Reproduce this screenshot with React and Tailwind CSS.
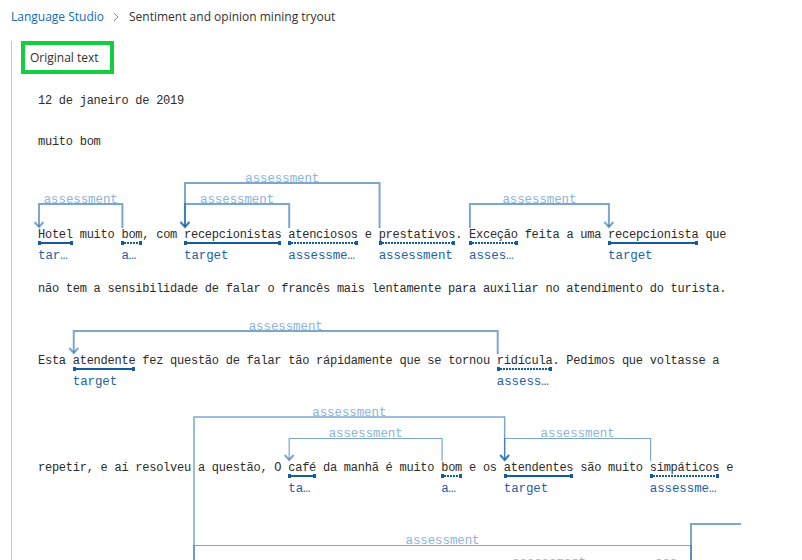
import React from "react";

const X = (i) => 38 + i * 6.95 + 1;
const LC = "rgba(15,95,168,0.55)";
const LABEL = "#8db3d9";

function Mark({ kind, label, children }) {
  return (
    <span className="relative">
      {children}
      {kind === "t" ? (
        <span className="absolute left-0 right-0 top-[14px] h-[2px] bg-[#135d9f]" />
      ) : (
        <span className="absolute left-0 right-0 top-[14px] h-[2px] bg-[repeating-linear-gradient(90deg,#135d9f_0px,#135d9f_2px,transparent_2px,transparent_3px)]" />
      )}
      <span className="absolute left-0 top-[13px] h-[4px] w-[3px] bg-[#135d9f]" />
      <span className="absolute right-0 top-[13px] h-[4px] w-[3px] bg-[#135d9f]" />
      <span className="absolute left-0 top-[20px] whitespace-nowrap text-[12.5px] leading-[16px] tracking-[-0.1px] text-[#1b62a6]">
        {label}
      </span>
    </span>
  );
}

function Arc({ from, to, y, top, w = 2, arrow = true, label = "assessment" }) {
  const mid = (from + to) / 2;
  return (
    <g>
      <path
        d={`M${from} ${top + 1} V${y} H${to} V${top - 0.5}`}
        fill="none"
        stroke={LC}
        strokeWidth={w}
      />
      {arrow && (
        <polyline
          points={`${to - 4.5},${top - 5} ${to},${top} ${to + 4.5},${top - 5}`}
          fill="none"
          stroke={LC}
          strokeWidth={2}
        />
      )}
      <text
        x={mid}
        y={y - 1.5}
        textAnchor="middle"
        fontFamily="'Liberation Mono', monospace"
        fontSize="12.5"
        letterSpacing="-0.1"
        fill={LABEL}
      >
        {label}
      </text>
    </g>
  );
}

export default function App() {
  return (
    <div className="relative h-[560px] w-[802px] overflow-hidden bg-white">
      <div className="flex h-[33px] items-center pl-[11px] font-['Open_Sans',sans-serif] text-[12px]">
        <span className="text-[#0f6cbd]">Language Studio</span>
        <svg className="ml-[9px] mr-[10px]" width="6" height="10" viewBox="0 0 6 10">
          <path d="M1 1 L5 5 L1 9" fill="none" stroke="#8a8886" strokeWidth="1" />
        </svg>
        <span className="text-[#323130]">Sentiment and opinion mining tryout</span>
      </div>
      <div className="ml-[11px] h-[527px] border-l border-[#c8c6c4]">
        <div className="ml-[9px] mt-[8px] flex h-[33px] w-[93px] items-center border-4 border-[#12cf40] pl-[5px] font-['Open_Sans',sans-serif] text-[12px] text-[#323130]">
          Original text
        </div>
        <div className="whitespace-pre pl-[26px] font-['Liberation_Mono',monospace] text-[12px] leading-[16px] tracking-[-0.25px] text-[#2b2b2b]">
          <div className="mt-[19px]">12 de janeiro de 2019</div>
          <div className="mt-[25px]">muito bom</div>
          <div className="mt-[77px]">
            <Mark kind="t" label="tar…">Hotel</Mark>
            {" muito "}
            <Mark kind="a" label="a…">bom</Mark>
            {", com "}
            <Mark kind="t" label="target">recepcionistas</Mark>
            {" "}
            <Mark kind="a" label="assessme…">atenciosos</Mark>
            {" e "}
            <Mark kind="a" label="assessment">prestativos</Mark>
            {". "}
            <Mark kind="a" label="asses…">Exceção</Mark>
            {" feita a uma "}
            <Mark kind="t" label="target">recepcionista</Mark>
            {" que"}
          </div>
          <div className="mt-[38px]">
            não tem a sensibilidade de falar o francês mais lentamente para auxiliar no atendimento do turista.
          </div>
          <div className="mt-[56px]">
            {"Esta "}
            <Mark kind="t" label="target">atendente</Mark>
            {" fez questão de falar tão rápidamente que se tornou "}
            <Mark kind="a" label="assess…">ridícula</Mark>
            {". Pedimos que voltasse a"}
          </div>
          <div className="mt-[91px]">
            {"repetir, e aí resolveu a questão, O "}
            <Mark kind="t" label="ta…">café</Mark>
            {" da manhã é muito "}
            <Mark kind="a" label="a…">bom</Mark>
            {" e os "}
            <Mark kind="t" label="target">atendentes</Mark>
            {" são muito "}
            <Mark kind="a" label="assessme…">simpáticos</Mark>
            {" e"}
          </div>
        </div>
      </div>

      <svg
        className="pointer-events-none absolute left-0 top-0"
        width="741"
        height="560"
        viewBox="0 0 741 560"
      >
        <Arc from={X(12)} to={X(0)} y={204} top={227} />
        <Arc from={X(36)} to={X(21)} y={204} top={227} />
        <Arc from={X(49)} to={X(21)} y={183} top={227} />
        <Arc from={X(62)} to={X(82)} y={204} top={227} />
        <Arc from={X(66)} to={X(5)} y={331} top={353} />
        <path d={`M194 570 V417 H${X(67)} V459.5`} fill="none" stroke={LC} strokeWidth="1.5" />
        <polyline
          points={`${X(67) - 4.5},455 ${X(67)},460 ${X(67) + 4.5},455`}
          fill="none"
          stroke={LC}
          strokeWidth="2"
        />
        <text
          x={(194 + X(67)) / 2}
          y={415.5}
          textAnchor="middle"
          fontFamily="'Liberation Mono', monospace"
          fontSize="12.5"
          letterSpacing="-0.1"
          fill={LABEL}
        >
          assessment
        </text>
        <Arc from={X(58)} to={X(36)} y={438.5} top={460} w={1.2} />
        <Arc from={X(88)} to={X(67)} y={438.5} top={460} w={1.2} />
        <path d="M194 570 V545.5 H691 V570" fill="none" stroke={LC} strokeWidth="1.2" />
        <text
          x={442.5}
          y={543.5}
          textAnchor="middle"
          fontFamily="'Liberation Mono', monospace"
          fontSize="12.5"
          letterSpacing="-0.1"
          fill={LABEL}
        >
          assessment
        </text>
        <path d="M691 570 V524 H745" fill="none" stroke={LC} strokeWidth="2" />
        <text
          x={549}
          y={566}
          textAnchor="middle"
          fontFamily="'Liberation Mono', monospace"
          fontSize="12.5"
          letterSpacing="-0.1"
          fill={LABEL}
        >
          assessment
        </text>
        <text
          x={655}
          y={566}
          fontFamily="'Liberation Mono', monospace"
          fontSize="12.5"
          letterSpacing="-0.1"
          fill={LABEL}
        >
          ass…
        </text>
      </svg>
    </div>
  );
}
